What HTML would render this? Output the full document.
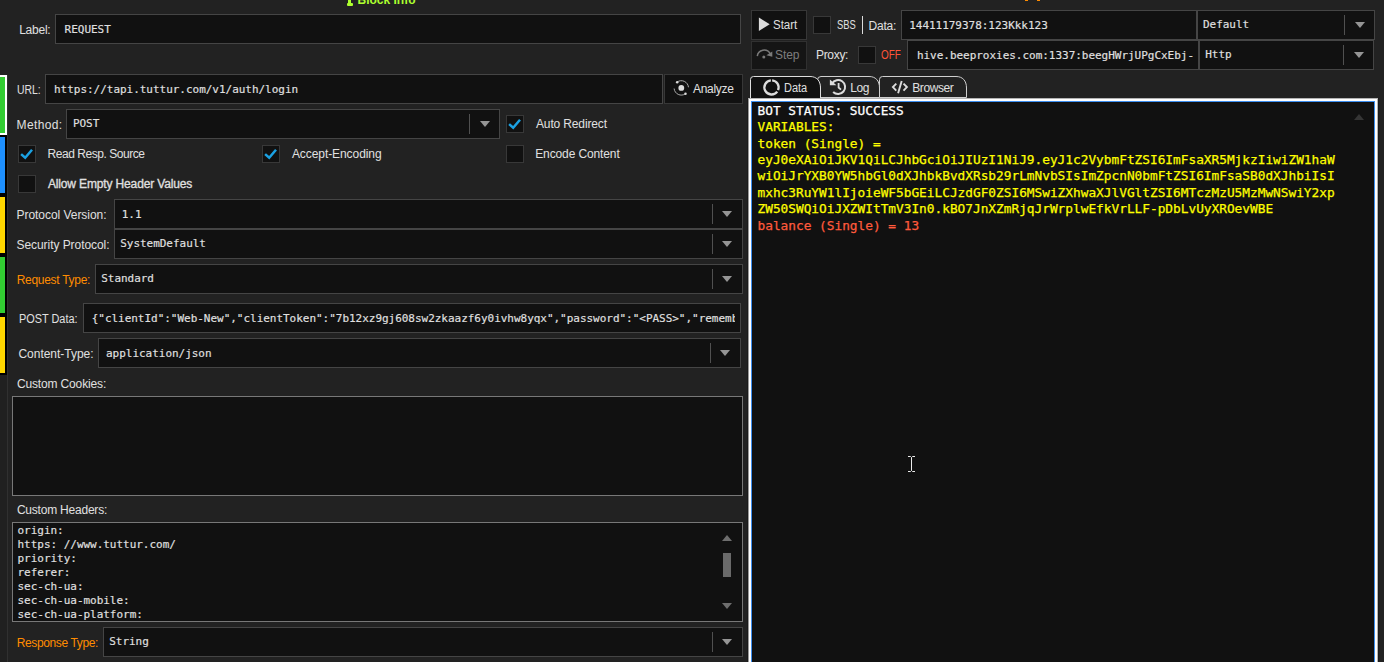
<!DOCTYPE html>
<html lang="en">
<head>
<meta charset="utf-8">
<title>Request Block</title>
<style>
html,body{margin:0;padding:0;}
body{width:1384px;height:662px;overflow:hidden;background:#222222;position:relative;
  font-family:"Liberation Sans",sans-serif;font-size:12px;color:#dcdcdc;}
.a{position:absolute;box-sizing:border-box;}
.box{position:absolute;box-sizing:border-box;background:#111111;border:1px solid #454545;}
.btn{position:absolute;box-sizing:border-box;background:#111111;border:1px solid #373737;}
.ta{position:absolute;box-sizing:border-box;background:#111111;border:1px solid #787878;}
.lbl{position:absolute;white-space:nowrap;font-family:"Liberation Sans",sans-serif;font-size:12px;line-height:14px;color:#e0e0e0;}
.mono{position:absolute;white-space:nowrap;font-family:"DejaVu Sans Mono","Liberation Mono",monospace;font-size:11px;line-height:14px;color:#e0e0e0;letter-spacing:-0.025px;-webkit-text-stroke:0.15px #e0e0e0;}
.cb{position:absolute;box-sizing:border-box;width:18px;height:18px;background:#111111;border:1px solid #383838;}
.cb svg{position:absolute;left:-1px;top:-1px;}
.sep{position:absolute;width:1px;background:#505050;}
.arr{position:absolute;width:0;height:0;border-left:5px solid transparent;border-right:5px solid transparent;border-top:6px solid #959595;}
.bar{position:absolute;left:0;width:7px;box-sizing:border-box;border:2px solid #000;border-left:none;}
.big{position:absolute;white-space:pre;font-family:"DejaVu Sans Mono","Liberation Mono",monospace;font-size:12.8px;line-height:16.36px;color:#ffff00;letter-spacing:-0.009px;-webkit-text-stroke:0.25px currentColor;}
</style>
</head>
<body>

<!-- block list colour bars -->
<div id="block-bars">
<div class="a" style="left:0;top:75px;width:7px;height:587px;background:#202020;"></div>
<div class="a" style="left:0;top:75px;width:7px;height:300px;background:#000;"></div>
<div class="a" style="left:7px;top:75px;width:1px;height:587px;background:#303030;"></div>
<div class="bar" style="top:75px;height:60px;background:#32cd32;border-color:#ffffff;"></div>
<div class="bar" style="top:135px;height:60px;background:#1e90ff;border-color:#000;"></div>
<div class="bar" style="top:195px;height:60px;background:#ffd700;border-color:#000;"></div>
<div class="bar" style="top:255px;height:60px;background:#32cd32;border-color:#000;"></div>
<div class="bar" style="top:315px;height:60px;background:#ffd700;border-color:#000;"></div>
</div>
<!-- headings (cut off by viewport) -->
<div id="headings">
<div class="lbl" id="h_block" style="left:357.5px;top:-7px;font-weight:bold;font-size:12px;color:#adff2f;">Block Info</div>
<div class="a" style="left:348px;top:-2px;width:3px;height:6px;background:#adff2f;"></div>
<div class="a" style="left:346.5px;top:3px;width:6px;height:3px;background:#adff2f;border-radius:1px;"></div>
<div class="a" style="left:1025px;top:0;width:3px;height:1px;background:#ff8c00;"></div>
<div class="a" style="left:1037px;top:0;width:3px;height:1px;background:#ff8c00;"></div>
</div>
<!-- request block settings: inputs, dropdowns, checkboxes -->
<div id="block-settings">
<div class="box" style="left:55px;top:14px;width:686px;height:30px;"></div>
<div class="box" style="left:45px;top:74px;width:618px;height:30px;"></div>
<div class="btn" style="left:664px;top:74px;width:79px;height:30px;"></div>
<div class="box" style="left:66px;top:109px;width:434px;height:30px;"></div>
<div class="sep" style="left:469px;top:114px;height:20px;"></div>
<div class="arr" style="left:480px;top:121px;"></div>
<div class="box" style="left:114px;top:199px;width:629px;height:30px;"></div>
<div class="sep" style="left:712px;top:204px;height:20px;"></div>
<div class="arr" style="left:722px;top:211px;"></div>
<div class="box" style="left:114px;top:229px;width:629px;height:30px;"></div>
<div class="sep" style="left:712px;top:234px;height:20px;"></div>
<div class="arr" style="left:722px;top:241px;"></div>
<div class="box" style="left:95px;top:264px;width:648px;height:30px;"></div>
<div class="sep" style="left:712px;top:269px;height:20px;"></div>
<div class="arr" style="left:722px;top:276px;"></div>
<div class="box" style="left:83px;top:303px;width:658px;height:30px;"></div>
<div class="box" style="left:98px;top:338px;width:643px;height:30px;"></div>
<div class="sep" style="left:710px;top:343px;height:20px;"></div>
<div class="arr" style="left:720px;top:350px;"></div>
<div class="ta" style="left:12px;top:396px;width:731px;height:100px;"></div>
<div class="ta" style="left:12px;top:522px;width:731px;height:100px;"></div>
<div class="box" style="left:103px;top:627px;width:640px;height:30px;"></div>
<div class="sep" style="left:712px;top:632px;height:20px;"></div>
<div class="arr" style="left:722px;top:639px;"></div>
<svg class="a" style="left:670px;top:78px;" width="22" height="20" viewBox="670 78 22 20">
  <circle cx="681.300" cy="87.900" r="2.900" fill="#dcdcdc"/>
  <path d="M677.170 82 A7.200 7.200 0 0 1 688.470 87.270" fill="none" stroke="#a8a8a8" stroke-width="1"/>
  <path d="M685.430 93.800 A7.200 7.200 0 0 1 674.130 88.530" fill="none" stroke="#a8a8a8" stroke-width="1"/>
  <circle cx="677.200" cy="82.200" r="1.250" fill="#dcdcdc"/>
  <circle cx="685.500" cy="93.700" r="1.250" fill="#dcdcdc"/>
</svg>
<div class="cb" style="left:506px;top:115px;"><svg width="18" height="18" viewBox="0 0 18 18"><path d="M3.1 9.1 L7.2 12.8 L14.0 4.7" fill="none" stroke="#1ba1e2" stroke-width="2.5"/></svg></div>
<div class="cb" style="left:18px;top:145px;"><svg width="18" height="18" viewBox="0 0 18 18"><path d="M3.1 9.1 L7.2 12.8 L14.0 4.7" fill="none" stroke="#1ba1e2" stroke-width="2.5"/></svg></div>
<div class="cb" style="left:262px;top:145px;"><svg width="18" height="18" viewBox="0 0 18 18"><path d="M3.1 9.1 L7.2 12.8 L14.0 4.7" fill="none" stroke="#1ba1e2" stroke-width="2.5"/></svg></div>
<div class="cb" style="left:506px;top:145px;"></div>
<div class="cb" style="left:18px;top:175px;"></div>
<div class="a" style="left:13px;top:523px;width:729px;height:98px;overflow:hidden;">
<div class="mono" id="m_h0" style="left:4.5px;top:1px;">origin:</div>
<div class="mono" id="m_h1" style="left:4.5px;top:15px;">https: //www.tuttur.com/</div>
<div class="mono" id="m_h2" style="left:4.5px;top:29px;">priority:</div>
<div class="mono" id="m_h3" style="left:4.5px;top:43px;">referer:</div>
<div class="mono" id="m_h4" style="left:4.5px;top:57px;">sec-ch-ua:</div>
<div class="mono" id="m_h5" style="left:4.5px;top:71px;">sec-ch-ua-mobile:</div>
<div class="mono" id="m_h6" style="left:4.5px;top:85px;">sec-ch-ua-platform:</div>
</div>
<div class="a" style="left:722px;top:535px;width:0;height:0;border-left:5px solid transparent;border-right:5px solid transparent;border-bottom:6px solid #6e6e6e;"></div>
<div class="a" style="left:723px;top:553px;width:8px;height:24px;background:#6a6a6a;"></div>
<div class="a" style="left:722px;top:603px;width:0;height:0;border-left:5px solid transparent;border-right:5px solid transparent;border-top:6px solid #6e6e6e;"></div>
</div>
<div class="a" style="left:747px;top:98px;width:1px;height:564px;background:#1b1b1b;"></div>
<!-- debugger toolbar -->
<div id="debugger-toolbar">
<div class="btn" style="left:751px;top:10px;width:56px;height:30px;"></div>
<svg class="a" style="left:755px;top:14px;" width="18" height="20" viewBox="755 14 18 20"><path d="M758.900 17.500 L758.900 31 L769.700 24.250 Z" fill="#dcdcdc"/></svg>
<div class="cb" style="left:813px;top:16px;"></div>
<div class="a" style="left:862px;top:16px;width:1px;height:18px;background:#dcdcdc;"></div>
<div class="box" style="left:901px;top:10px;width:296px;height:30px;"></div>
<div class="box" style="left:1197px;top:10px;width:178px;height:30px;"></div>
<div class="sep" style="left:1344px;top:15px;height:20px;"></div>
<div class="arr" style="left:1355px;top:22px;"></div>
<div class="btn" style="left:751px;top:41px;width:56px;height:29px;background:#151515;border-color:#303030;"></div>
<svg class="a" style="left:750px;top:40px;" width="30" height="30" viewBox="750 40 30 30">
  <path d="M757.300 56.100 A6.800 6.800 0 0 1 770.100 53.700" fill="none" stroke="#7a7a7a" stroke-width="1.500"/>
  <path d="M772.300 51.600 L772.300 56.700 L766.400 55.300 Z" fill="#7a7a7a"/>
  <circle cx="763.800" cy="57.100" r="1.500" fill="#7a7a7a"/>
</svg>
<div class="cb" style="left:858px;top:46px;"></div>
<div class="box" style="left:907px;top:40px;width:292px;height:30px;"></div>
<div class="box" style="left:1199px;top:40px;width:175px;height:30px;"></div>
<div class="sep" style="left:1343px;top:45px;height:20px;"></div>
<div class="arr" style="left:1354px;top:52px;"></div>
</div>
<!-- debugger tabs -->
<div id="debugger-tabs">
<svg class="a" style="left:745px;top:70px;" width="230" height="32" viewBox="745 70 230 32">
  <path d="M879.500 97.500 L879.500 79.500 Q879.500 76.500 882.500 76.500 L956 76.500 C962.500 76.500 966.500 80.500 966.500 88 L966.500 97.500 Z" fill="#222222" stroke="#cfcfcf" stroke-width="1"/>
  <path d="M820.500 97.500 L820.500 88 C820.500 84 817.500 82 817.500 80 Q817.500 76.500 821 76.500 L869 76.500 C875.500 76.500 879.500 80.500 879.500 88 L879.500 97.500 Z" fill="#222222" stroke="#cfcfcf" stroke-width="1"/>
  <path d="M750.500 99 L750.500 79.500 Q750.500 76.500 753.500 76.500 L810 76.500 C816.500 76.500 820.500 80.500 820.500 88 L820.500 99 Z" fill="#111111" stroke="#dedede" stroke-width="1"/>
  <!-- data usage icon -->
  <g transform="translate(761.5 77.4)" fill="none" stroke="#dcdcdc" stroke-width="2.300">
    <path d="M10.620 2.930 A7.100 7.100 0 0 1 16.580 12.660"/>
    <path d="M15.740 14.170 A7.100 7.100 0 1 1 9.380 2.930"/>
  </g>
  <!-- history icon -->
  <path d="M832.040 83.500 A7 7 0 1 1 833.150 91.950" fill="none" stroke="#dcdcdc" stroke-width="2"/>
  <path d="M829.900 79.500 L829.900 85.300 L836.400 85.300 Z" fill="#dcdcdc"/>
  <path d="M838.600 83.100 L838.600 87.500 L841 89.600" fill="none" stroke="#dcdcdc" stroke-width="1.800"/>
  <!-- code icon -->
  <g fill="none" stroke="#dcdcdc" stroke-width="1.900">
    <path d="M896.300 83.600 L892.900 87.100 L896.300 90.600"/>
    <path d="M903.500 83.600 L906.900 87.100 L903.500 90.600"/>
    <path d="M901.700 81 L898.100 93.200"/>
  </g>
</svg>
</div>
<!-- debugger data output -->
<div id="debugger-output">
<div class="a" style="left:748px;top:98px;width:630px;height:580px;border:1px solid #b4b4b4;border-left-color:#9a9a9a;"></div>
<div class="a" style="left:749px;top:99px;width:628px;height:580px;background:#111111;border:2px solid #ffffff;"></div>
<div class="a" style="left:751px;top:101px;width:624px;height:580px;border:1px solid #3d8ff0;"></div>
<div class="a" style="left:1378px;top:98px;width:1px;height:564px;background:#1b1b1b;"></div>
<div class="a" style="left:1354px;top:114px;width:0;height:0;border-left:5px solid transparent;border-right:5px solid transparent;border-bottom:6px solid #353535;"></div>
<div class="big" id="big" style="left:757.5px;top:103px;"><span style="color:#ffffff">BOT STATUS: SUCCESS</span>
VARIABLES:
token (Single) =
eyJ0eXAiOiJKV1QiLCJhbGciOiJIUzI1NiJ9.eyJ1c2VybmFtZSI6ImFsaXR5MjkzIiwiZW1haW
wiOiJrYXB0YW5hbGl0dXJhbkBvdXRsb29rLmNvbSIsImZpcnN0bmFtZSI6ImFsaSB0dXJhbiIsI
mxhc3RuYW1lIjoieWF5bGEiLCJzdGF0ZSI6MSwiZXhwaXJlVGltZSI6MTczMzU5MzMwNSwiY2xp
ZW50SWQiOiJXZWItTmV3In0.kBO7JnXZmRjqJrWrplwEfkVrLLF-pDbLvUyXROevWBE
<span style="color:#ff5a3c">balance (Single) = 13</span></div>
</div>
<!-- UI labels -->
<div id="labels">
<div class="lbl" id="l_label" style="left:19.20px;top:23px;letter-spacing:-0.240px;">Label:</div>
<div class="lbl" id="l_url" style="left:16.90px;top:83px;letter-spacing:0.000px;transform:scaleX(0.8668);transform-origin:0 0;">URL:</div>
<div class="lbl" id="l_method" style="left:16.50px;top:118px;letter-spacing:0.383px;">Method:</div>
<div class="lbl" id="l_auto" style="left:536.00px;top:117px;letter-spacing:-0.142px;">Auto Redirect</div>
<div class="lbl" id="l_read" style="left:47.50px;top:147px;letter-spacing:-0.450px;">Read Resp. Source</div>
<div class="lbl" id="l_accept" style="left:291.90px;top:147px;letter-spacing:-0.071px;">Accept-Encoding</div>
<div class="lbl" id="l_encode" style="left:535.20px;top:147px;letter-spacing:-0.116px;">Encode Content</div>
<div class="lbl" id="l_allow" style="left:47.90px;top:177px;letter-spacing:-0.142px;-webkit-text-stroke:0.3px #e0e0e0;">Allow Empty Header Values</div>
<div class="lbl" id="l_proto" style="left:16.50px;top:208px;letter-spacing:-0.044px;">Protocol Version:</div>
<div class="lbl" id="l_sec" style="left:16.50px;top:238px;letter-spacing:-0.059px;">Security Protocol:</div>
<div class="lbl" id="l_req" style="left:16.70px;top:273px;letter-spacing:-0.292px;color:#ff8c00;">Request Type:</div>
<div class="lbl" id="l_post" style="left:19.20px;top:312px;letter-spacing:0.000px;transform:scaleX(0.9078);transform-origin:0 0;">POST Data:</div>
<div class="lbl" id="l_ct" style="left:18.45px;top:347px;letter-spacing:-0.025px;">Content-Type:</div>
<div class="lbl" id="l_cc" style="left:16.90px;top:377px;letter-spacing:-0.143px;">Custom Cookies:</div>
<div class="lbl" id="l_ch" style="left:16.90px;top:503px;letter-spacing:-0.214px;">Custom Headers:</div>
<div class="lbl" id="l_resp" style="left:16.70px;top:636px;letter-spacing:-0.369px;color:#ff8c00;">Response Type:</div>
<div class="lbl" id="l_analyze" style="left:693.00px;top:82px;letter-spacing:-0.300px;">Analyze</div>
<div class="lbl" id="l_start" style="left:772.95px;top:18px;letter-spacing:0.000px;transform:scaleX(0.9580);transform-origin:0 0;">Start</div>
<div class="lbl" id="l_sbs" style="left:836.90px;top:18px;letter-spacing:0.000px;transform:scaleX(0.7801);transform-origin:0 0;">SBS</div>
<div class="lbl" id="l_data" style="left:868.45px;top:19px;letter-spacing:-0.176px;">Data:</div>
<div class="lbl" id="l_step" style="left:775.00px;top:48px;letter-spacing:-0.067px;color:#7d7d7d;">Step</div>
<div class="lbl" id="l_proxy" style="left:815.95px;top:48px;letter-spacing:-0.300px;">Proxy:</div>
<div class="lbl" id="l_off" style="left:881.30px;top:48px;letter-spacing:0.000px;transform:scaleX(0.8257);transform-origin:0 0;color:#ff5538;">OFF</div>
<div class="lbl" id="l_tdata" style="left:783.70px;top:81px;letter-spacing:0.000px;transform:scaleX(0.9157);transform-origin:0 0;">Data</div>
<div class="lbl" id="l_tlog" style="left:850.30px;top:81px;letter-spacing:-0.400px;">Log</div>
<div class="lbl" id="l_tbrowser" style="left:912.30px;top:81px;letter-spacing:-0.434px;">Browser</div>
</div>
<!-- field values -->
<div id="values">
<div class="mono" id="m_request" style="left:64.60px;top:23px;">REQUEST</div>
<div class="mono" id="m_url" style="left:54.00px;top:83px;">https://tapi.tuttur.com/v1/auth/login</div>
<div class="mono" id="m_post" style="left:72.90px;top:117px;">POST</div>
<div class="mono" id="m_11" style="left:121.70px;top:208px;">1.1</div>
<div class="mono" id="m_sys" style="left:120.20px;top:237px;">SystemDefault</div>
<div class="mono" id="m_std" style="left:101.20px;top:272px;">Standard</div>
<div class="mono" id="m_pd" style="left:91.70px;top:312px;width:643.5px;overflow:hidden;">{&quot;clientId&quot;:&quot;Web-New&quot;,&quot;clientToken&quot;:&quot;7b12xz9gj608sw2zkaazf6y0ivhw8yqx&quot;,&quot;password&quot;:&quot;&lt;PASS&gt;&quot;,&quot;rememberMe&quot;:true}</div>
<div class="mono" id="m_ct" style="left:106.00px;top:347px;">application/json</div>
<div class="mono" id="m_str" style="left:109.20px;top:635px;">String</div>
<div class="mono" id="m_data" style="left:909.20px;top:19px;">14411179378:123Kkk123</div>
<div class="mono" id="m_proxy" style="left:916.90px;top:49px;width:279.1px;overflow:hidden;">hive.beeproxies.com:1337:beegHWrjUPgCxEbj-</div>
<div class="mono" id="m_def" style="left:1202.95px;top:18px;">Default</div>
<div class="mono" id="m_http" style="left:1205.20px;top:48px;">Http</div>
</div>
<!-- mouse cursor -->
<svg class="a" style="left:907px;top:456px;" width="9" height="16" viewBox="0 0 9 16">
  <path d="M1 0.500 L3.500 0.500 L4.500 1.500 L5.500 0.500 L8 0.500 M4.500 1.500 L4.500 14.500 M1 15.500 L3.500 15.500 L4.500 14.500 L5.500 15.500 L8 15.500" fill="none" stroke="#ececec" stroke-width="1"/>
</svg>
</body>
</html>
